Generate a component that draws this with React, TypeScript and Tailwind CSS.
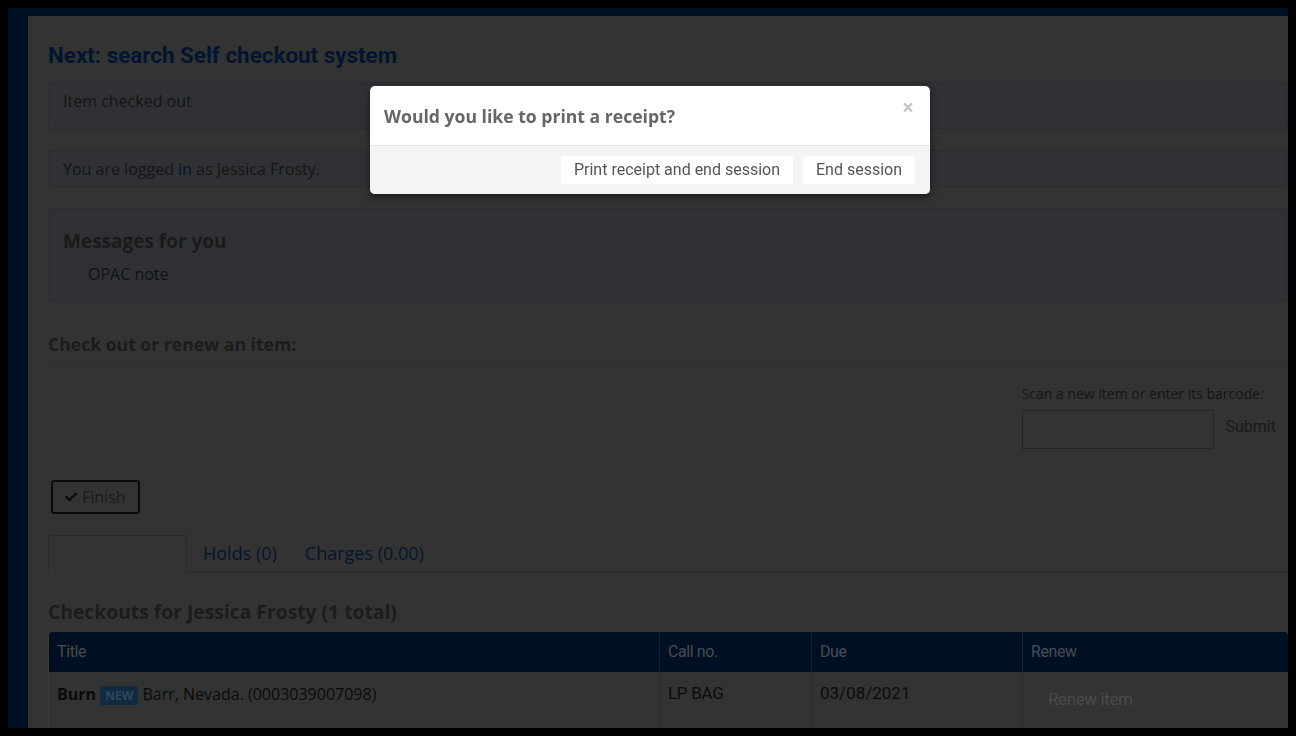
import { FaCheck } from 'react-icons/fa';

const sans = { fontFamily: '"Open Sans", "Noto Sans", sans-serif' };
const roboto = { fontFamily: 'Roboto, "Liberation Sans", sans-serif' };

function CheckoutTable() {
  return (
    <table className="w-full table-fixed border-separate border-spacing-0">
      <colgroup>
        <col className="w-[611px]" />
        <col className="w-[152px]" />
        <col className="w-[211px]" />
        <col />
      </colgroup>
      <thead>
        <tr className="h-10 text-[16px] text-[#474c54] tracking-[-0.4px]" style={roboto}>
          <th className="rounded-tl-[4px] border-l border-[#3a3a3a] bg-[#001022] pl-2 text-left font-normal">Title</th>
          <th className="border-l border-[#18222f] bg-[#001022] pl-2 text-left font-normal">Call no.</th>
          <th className="border-l border-[#18222f] bg-[#001022] pl-2 text-left font-normal">Due</th>
          <th className="rounded-tr-[4px] border-l border-[#18222f] bg-[#001022] pl-2 text-left font-normal">Renew</th>
        </tr>
      </thead>
      <tbody>
        <tr className="align-top text-[16px] text-[#0b0b0b]">
          <td className="h-[60px] border-l border-[#3a3a3a] pt-[10px] pl-2" style={sans}>
            <span className="font-bold">Burn</span>{' '}
            <span className="rounded-[3px] bg-[#112a40] px-[5px] py-[1px] text-[12px] font-bold text-[#2e475e]">NEW</span>{' '}
            Barr, Nevada. (0003039007098)
          </td>
          <td className="border-l border-[#2b2b2b] pt-[9px] pl-2 text-[17px] tracking-[-0.3px]" style={roboto}>LP BAG</td>
          <td className="border-l border-[#2b2b2b] pt-[9px] pl-2 text-[17px]" style={roboto}>03/08/2021</td>
          <td className="border-l border-[#2b2b2b] pt-[15px] pl-[25px] text-[17px] text-[#4a4a4a] tracking-[-0.4px]" style={roboto}>Renew item</td>
        </tr>
      </tbody>
    </table>
  );
}

function ReceiptModal() {
  return (
    <div className="fixed left-[370px] top-[86px] w-[560px] rounded-[5px] bg-white shadow-[0_3px_9px_rgba(0,0,0,0.5)]">
      <div className="relative h-[60px] border-b border-[#e5e5e5] px-[14px] pt-[17px]">
        <h3 className="text-[17.6px] font-bold text-[#666]" style={sans}>Would you like to print a receipt?</h3>
        <span className="absolute right-[16px] top-[11px] text-[21px] font-bold leading-none text-[#c4c4c4]" style={sans}>×</span>
      </div>
      <div className="flex h-[48px] items-center justify-end gap-[10px] rounded-b-[5px] bg-[#f4f4f4] px-[15px]">
        <button className="h-[28px] w-[232px] bg-white text-[16px] text-[#555]" style={roboto}>Print receipt and end session</button>
        <button className="h-[28px] w-[112px] bg-white text-[16px] text-[#555]" style={roboto}>End session</button>
      </div>
    </div>
  );
}

export default function App() {
  return (
    <div className="h-[736px] w-[1296px] overflow-hidden bg-black p-2">
      <div className="h-full bg-[#001024] pl-5 pt-2">
        <div className="h-full overflow-hidden bg-[#333333] pl-5 pt-[27px]">
          <h1 className="text-[22.4px] font-bold leading-6 text-[#03152e]" style={roboto}>
            Next: search Self checkout system
          </h1>

          <div className="mt-[15px] h-[47px] rounded-[4px] border border-[#2a2d30] bg-[#2f3134] px-[14px] pt-[6px] text-[16px] text-[#151515]" style={sans}>
            Item checked out
          </div>

          <div className="mt-[21px] flex h-[37px] items-center rounded-[4px] border border-[#2a2d30] bg-[#2f3134] px-[14px] text-[16px] text-[#151515]" style={sans}>
            <span>You are logged <span className="text-[#041426]">in</span> as Jessica Frosty.</span>
          </div>

          <div className="mt-[21px] h-[94px] rounded-[4px] border border-[#2a2d30] bg-[#2f3134] px-[14px] pt-[20px]" style={sans}>
            <h3 className="text-[19px] font-bold leading-6 text-[#1a1a1a]">Messages for you</h3>
            <div className="mt-[9px] pl-[25px] text-[16px] text-[#111]">OPAC note</div>
          </div>

          <h2 className="mt-[30px] text-[17.6px] font-bold leading-6 text-[#1c1c1c]" style={sans}>
            Check out or renew an item:
          </h2>
          <div className="mt-[8px] border-t border-[#2c2c2c]" />

          <div className="mt-[19px] flex justify-end pr-[12px]">
            <div>
              <div className="text-[14px] leading-5 text-[#151515]" style={sans}>Scan a new item or enter its barcode:</div>
              <div className="mt-[6px] flex items-center">
                <div className="h-[39px] w-[192px] border border-[#252525]" />
                <span className="-mt-[6px] ml-[12px] text-[16px] text-[#1a1a1a]" style={roboto}>Submit</span>
              </div>
            </div>
          </div>

          <button className="ml-[3px] mt-[31px] flex h-[34px] items-center gap-[5px] rounded-[3px] border-2 border-[#0b0b0b] px-[12px] text-[16px] text-[#1a1a1a]" style={sans}>
            <FaCheck className="h-[12px] w-[12px] text-[#0d0d0d]" />
            Finish
          </button>

          <div className="mt-[21px] flex h-[37px] items-end border-b border-[#2b2b2b] text-[18px] text-[#05162b]" style={sans}>
            <div className="-mb-px h-[37px] w-[139px] rounded-t-[3px] border border-b-0 border-[#2b2b2b] bg-[#333333]" />
            <div className="flex h-full items-center gap-[28px] pl-[16px]">
              <span>Holds (0)</span>
              <span>Charges (0.00)</span>
            </div>
          </div>

          <h2 className="mt-[28px] text-[19.3px] font-bold leading-6 text-[#1c1c1c]" style={sans}>
            Checkouts for Jessica Frosty (1 total)
          </h2>

          <div className="mt-[8px]">
            <CheckoutTable />
          </div>
        </div>
      </div>
      <ReceiptModal />
    </div>
  );
}
